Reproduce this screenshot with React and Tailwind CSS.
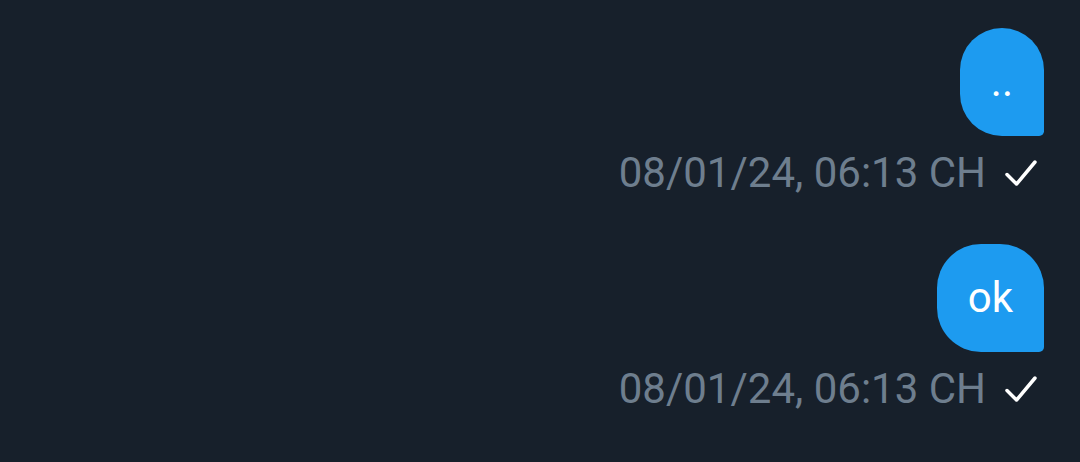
function Check() {
  return (
    <svg width="34" height="28" viewBox="0 0 34 28" fill="none" className="shrink-0">
      <path d="M3 15.5 L12.5 25 L31 3" stroke="#ffffff" strokeWidth="3.5" strokeLinecap="round" strokeLinejoin="round" />
    </svg>
  );
}

function Message({ text, time }) {
  return (
    <div className="flex flex-col items-end">
      <div className="bg-[#1d9bf0] text-white text-[42px] leading-[50px] px-[31px] py-[29px] rounded-[44px] rounded-br-[5px]">
        {text}
      </div>
      <div className="flex items-center gap-[18px] mt-[11px] pr-[6px]">
        <span className="text-[#6e7e8e] text-[42px] leading-[52px]">{time}</span>
        <Check />
      </div>
    </div>
  );
}

export default function App() {
  return (
    <div className="w-[1080px] h-[462px] bg-[#17202b] overflow-hidden" style={{ fontFamily: 'Roboto, "Noto Sans", sans-serif' }}>
      <div className="flex flex-col items-end gap-[45px] pt-[28px] pr-[36px]">
        <Message text=".." time="08/01/24, 06:13 CH" />
        <Message text="ok" time="08/01/24, 06:13 CH" />
      </div>
    </div>
  );
}
